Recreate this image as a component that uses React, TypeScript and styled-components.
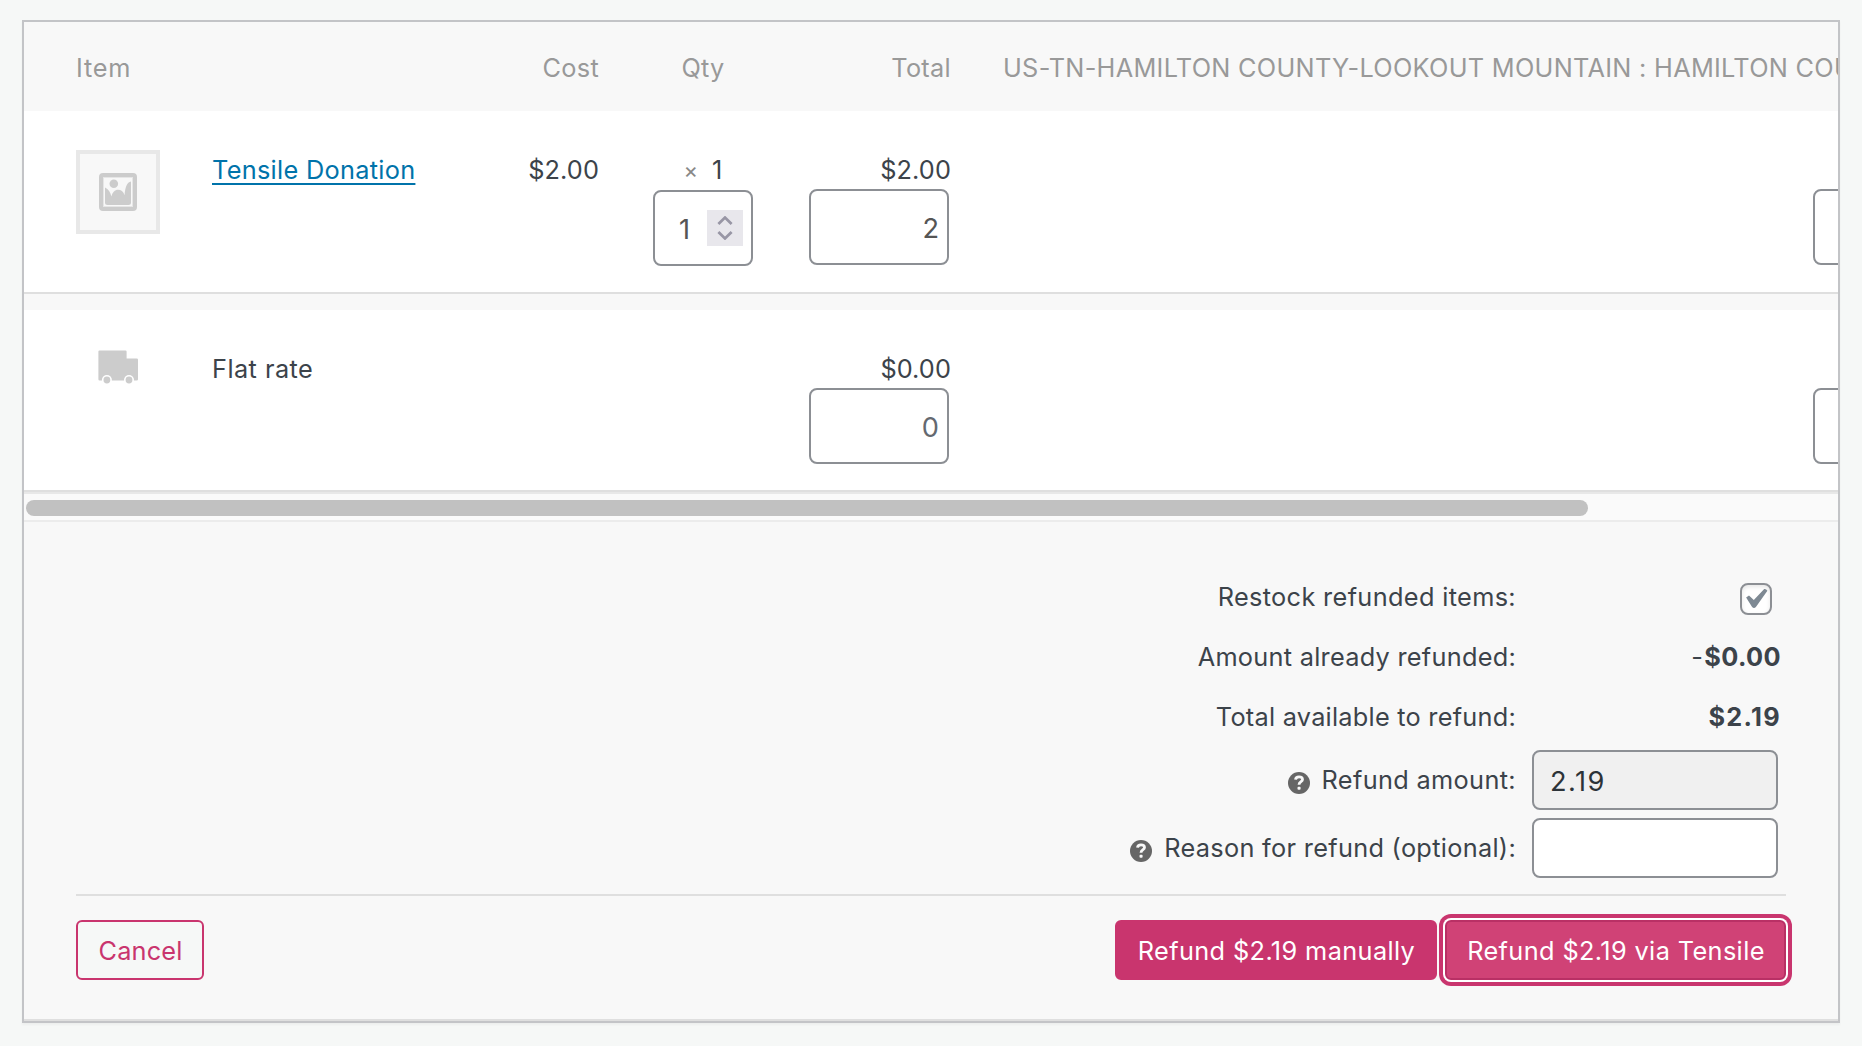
import React from "react";
import styled, { createGlobalStyle } from "styled-components";

const accent = "#c9356e";
const ink = "#3c434a";
const fieldBorder = "#8c8f94";

const GlobalStyle = createGlobalStyle`
  *, *::before, *::after { box-sizing: border-box; }
  body {
    margin: 0;
    background: #f6f8f7;
    color: ${ink};
    font-family: Inter, "Liberation Sans", sans-serif;
    font-size: 25.3px;
    line-height: 39px;
    letter-spacing: 0.3px;
  }
  input, button { font-family: inherit; margin: 0; outline: none; }
`;

const Page = styled.main`
  height: 1046px;
  padding: 20px 22px 23px;
  overflow: hidden;
`;

const Panel = styled.section`
  display: flex;
  flex-direction: column;
  height: 1003px;
  width: 1818px;
  border: 2px solid #c3c4c7;
  background: #f8f8f8;
  box-shadow: 0 2px 2px rgba(0, 0, 0, 0.04);
`;

const ItemsViewport = styled.div`
  overflow: hidden;
`;

const ItemRow = styled.div`
  display: grid;
  grid-template-columns: 136px 248px 140px 206px 146px 1004px;
  width: 1932px;
  height: 183px;
  padding: 39px 0 0 52px;
  background: #fff;
  border-bottom: 2px solid #dfdfdf;
`;

const HeaderRow = styled(ItemRow)`
  height: 89px;
  padding-top: 26px;
  background: #f8f8f8;
  border-bottom: 0;
  color: #999;
`;

const ShippingRow = styled(ItemRow)`
  height: 182px;
  margin-top: 16px;
`;

const Cell = styled.div<{ $align?: "start" | "center" | "end" }>`
  display: flex;
  flex-direction: column;
  align-items: ${(p) => p.$align ?? "start"};
  white-space: nowrap;
`;

const AmountCell = styled(Cell)`
  align-items: flex-end;
  padding-right: 1px;
`;

const TaxHeading = styled(Cell)`
  padding-left: 51px;
  letter-spacing: 0.29px;
`;

const TaxCell = styled(Cell)`
  padding-top: 39px;
`;

const Text = styled.span<{ $track?: number }>`
  letter-spacing: ${(p) => p.$track ?? 0.4}px;
`;

const Thumb = styled.div`
  display: grid;
  place-items: center;
  width: 84px;
  height: 84px;
  background: #f8f8f8;
  border: 4px solid #e8e8e8;
`;

const TruckSlot = styled.div`
  display: flex;
  padding: 1px 0 0 22px;
`;

const ItemLink = styled.a`
  color: #0073aa;
  text-decoration: underline;
  text-decoration-thickness: 2px;
  text-underline-offset: 4px;
  text-decoration-skip-ink: none;
`;

const Quantity = styled.div`
  display: flex;
  gap: 14px;
  height: 39px;
`;

const Times = styled.small`
  padding-top: 1px;
  color: #888;
  font-size: 22px;
  letter-spacing: 0;
`;

const Field = styled.input`
  height: 60px;
  width: 246px;
  padding: 2px 16px 0;
  border: 2px solid ${fieldBorder};
  border-radius: 8px;
  background: #fff;
  color: #2c3338;
  font-size: 27.2px;
  letter-spacing: 1.5px;
  &:read-only { background: #f0f0f0; }
`;

const AmountField = styled(Field)`
  width: 140px;
  height: 76px;
  margin-right: 2px;
  padding: 3px 8px 0;
  color: #555;
  letter-spacing: 0;
  text-align: right;
  &::placeholder { color: #646970; opacity: 1; }
`;

const TaxField = styled(AmountField)`
  margin-right: 3px;
`;

const QuantityField = styled.div`
  display: flex;
  align-items: center;
  justify-content: space-between;
  width: 100px;
  height: 76px;
  margin-top: 1px;
  padding: 0 8px 0 24px;
  border: 2px solid ${fieldBorder};
  border-radius: 8px;
  background: #fff;
  color: #555;
  font-size: 27.2px;
`;

const QuantityValue = styled.span`
  padding-top: 2px;
`;

const Stepper = styled.span`
  display: grid;
  place-items: center;
  width: 36px;
  height: 36px;
  background: #e8e7ec;
`;

const ScrollTrack = styled.div`
  height: 30px;
  padding: 6px 2px;
  background: #fafafa;
  border-top: 2px solid #e8e8e8;
  border-bottom: 2px solid #ececec;
`;

const ScrollThumb = styled.div`
  width: 1562px;
  height: 16px;
  border-radius: 8px;
  background: #c1c1c1;
`;

const Summary = styled.div`
  display: flex;
  flex-direction: column;
  padding: 45px 56px 0 0;
`;

const SummaryRow = styled.div<{ $gap?: number }>`
  display: grid;
  grid-template-columns: 1fr 250px;
  column-gap: 16px;
  align-items: center;
  height: 60px;
  margin-top: ${(p) => p.$gap ?? 0}px;
`;

const Label = styled.label<{ $track?: number }>`
  display: flex;
  align-items: center;
  justify-content: flex-end;
  gap: 12px;
  padding-bottom: 2px;
  letter-spacing: ${(p) => p.$track ?? 0.42}px;
`;

const Value = styled.div`
  padding: 0 1px 2px 0;
  text-align: right;
`;

const Checkbox = styled.span`
  display: grid;
  place-items: center;
  width: 32px;
  height: 32px;
  margin: 4px 10px 0 auto;
  padding-left: 2px;
  border: 2px solid ${fieldBorder};
  border-radius: 8px;
  background: #fff;
  box-shadow: inset 0 2px 4px rgba(0, 0, 0, 0.1);
`;

const Money = styled.strong<{ $track: number }>`
  margin-left: 1px;
  font-weight: 700;
  letter-spacing: ${(p) => p.$track}px;
`;

const HelpTip = styled.span`
  display: grid;
  place-items: center;
  width: 22px;
  height: 22px;
  margin-top: 7px;
  border-radius: 50%;
  background: #666;
`;

const Actions = styled.footer`
  display: flex;
  justify-content: space-between;
  height: 125px;
  margin: 16px 52px 0;
  padding-top: 24px;
  border-top: 2px solid #dfdfdf;
`;

const ActionGroup = styled.div`
  display: flex;
  gap: 8px;
`;

const Button = styled.button<{ $width: number; $track?: number }>`
  width: ${(p) => p.$width}px;
  height: 60px;
  padding: 1px 0 0 1px;
  border: 2px solid ${accent};
  border-radius: 6px;
  background: #f6f8f7;
  color: ${accent};
  font-size: 25.3px;
  letter-spacing: ${(p) => p.$track ?? 0.38}px;
  white-space: nowrap;
`;

const PrimaryButton = styled(Button)`
  background: ${accent};
  color: #fff;
`;

const FocusedButton = styled(PrimaryButton)`
  background: #d04276;
  border-color: #b93065;
  box-shadow: 0 0 0 2px #fff, 0 0 0 6px ${accent};
`;

const PanelFoot = styled.div`
  height: 2px;
  margin-top: auto;
  background: #dfdfdf;
`;

const ImageIcon = () => (
  <svg width="38" height="38" viewBox="0 0 38 38" fill="none">
    <rect x="2" y="2" width="34" height="34" rx="2" stroke="#ccc" strokeWidth="4" />
    <rect x="4.5" y="4.5" width="29" height="29" stroke="#e6e6e6" />
    <circle cx="14.8" cy="10.7" r="4.3" fill="#ccc" />
    <path
      d="M6 14.6C9.5 16 11.4 19.5 12.4 23.6C13.5 19 16 16.8 19 16.8C22 16.8 24.4 18.5 25.6 22.2C26 14.5 28 9 32 8.4V29.5Q32 32 29.5 32H8.5Q6 32 6 29.5Z"
      fill="#ccc"
    />
  </svg>
);

const TruckIcon = () => (
  <svg width="41" height="36" viewBox="0 0 41 36">
    <path d="M1.5 .5H27.5Q28.6 .5 28.6 1.6V8.5H38.8Q40 8.5 40 9.7V29.2Q40 30.4 38.8 30.4H1.5Q.4 30.4 .4 29.2V1.6Q.4 .5 1.5 .5Z" fill="#ccc" />
    <circle cx="8.9" cy="30" r="5" fill="#fff" />
    <circle cx="31" cy="30" r="5" fill="#fff" />
    <circle cx="8.9" cy="30" r="3.4" fill="#ccc" />
    <circle cx="31" cy="30" r="3.4" fill="#ccc" />
  </svg>
);

const StepperIcon = () => (
  <svg width="16" height="24" viewBox="0 0 16 24" fill="none" stroke="#9896a5" strokeWidth="2.8">
    <path d="M1.4 8L8 1.6L14.6 8M1.4 16L8 22.4L14.6 16" />
  </svg>
);

const CheckIcon = () => (
  <svg width="24" height="22" viewBox="0 0 24 22">
    <path d="M1.1 9.6L4 7.6L8.8 12L19.2 1.1Q21 .6 22.4 2.8L10.9 18.9Q9 21.2 7.1 18.9Z" fill="#7e8993" />
  </svg>
);

const QuestionIcon = () => (
  <svg width="12" height="16" viewBox="0 0 12 16" fill="none">
    <path d="M2.5 4.6C2.7 2.7 4 1.8 6 1.8C8.2 1.8 9.5 2.8 9.5 4.5C9.5 6.8 6 6.6 6 9.8" stroke="#f8f8f8" strokeWidth="2.8" />
    <rect x="4.5" y="11.8" width="3.1" height="3" rx="1" fill="#f8f8f8" />
  </svg>
);

export default function App() {
  return (
    <>
      <GlobalStyle />
      <Page>
        <Panel>
          <ItemsViewport>
            <HeaderRow>
              <Cell><Text $track={0.8}>Item</Text></Cell>
              <Cell />
              <AmountCell>Cost</AmountCell>
              <Cell $align="center">Qty</Cell>
              <AmountCell>Total</AmountCell>
              <TaxHeading>US-TN-HAMILTON COUNTY-LOOKOUT MOUNTAIN : HAMILTON COU</TaxHeading>
            </HeaderRow>
            <ItemRow>
              <Thumb><ImageIcon /></Thumb>
              <Cell><ItemLink>Tensile Donation</ItemLink></Cell>
              <AmountCell><Text $track={0.1}>$2.00</Text></AmountCell>
              <Cell $align="center">
                <Quantity><Times>×</Times>1</Quantity>
                <QuantityField>
                  <QuantityValue>1</QuantityValue>
                  <Stepper><StepperIcon /></Stepper>
                </QuantityField>
              </Cell>
              <AmountCell>
                <Text $track={0.1}>$2.00</Text>
                <AmountField defaultValue="2" />
              </AmountCell>
              <TaxCell $align="end"><TaxField /></TaxCell>
            </ItemRow>
            <ShippingRow>
              <TruckSlot><TruckIcon /></TruckSlot>
              <Cell><Text $track={0.45}>Flat rate</Text></Cell>
              <Cell />
              <Cell />
              <AmountCell>
                <Text $track={0.1}>$0.00</Text>
                <AmountField placeholder="0" />
              </AmountCell>
              <TaxCell $align="end"><TaxField /></TaxCell>
            </ShippingRow>
          </ItemsViewport>
          <ScrollTrack><ScrollThumb /></ScrollTrack>

          <Summary>
            <SummaryRow>
              <Label $track={0.35}>Restock refunded items:</Label>
              <Checkbox><CheckIcon /></Checkbox>
            </SummaryRow>
            <SummaryRow>
              <Label $track={0.27}>Amount already refunded:</Label>
              <Value>-<Money $track={0.4}>$0.00</Money></Value>
            </SummaryRow>
            <SummaryRow>
              <Label $track={0.25}>Total available to refund:</Label>
              <Value><Money $track={1.3}>$2.19</Money></Value>
            </SummaryRow>
            <SummaryRow $gap={3}>
              <Label $track={0.35}><HelpTip><QuestionIcon /></HelpTip>Refund amount:</Label>
              <Field readOnly value="2.19" />
            </SummaryRow>
            <SummaryRow $gap={8}>
              <Label $track={0.31}><HelpTip><QuestionIcon /></HelpTip>Reason for refund (optional):</Label>
              <Field />
            </SummaryRow>
          </Summary>

          <Actions>
            <Button $width={128} $track={0.15}>Cancel</Button>
            <ActionGroup>
              <PrimaryButton $width={322}>Refund $2.19 manually</PrimaryButton>
              <FocusedButton $width={341}>Refund $2.19 via Tensile</FocusedButton>
            </ActionGroup>
          </Actions>
          <PanelFoot />
        </Panel>
      </Page>
    </>
  );
}
